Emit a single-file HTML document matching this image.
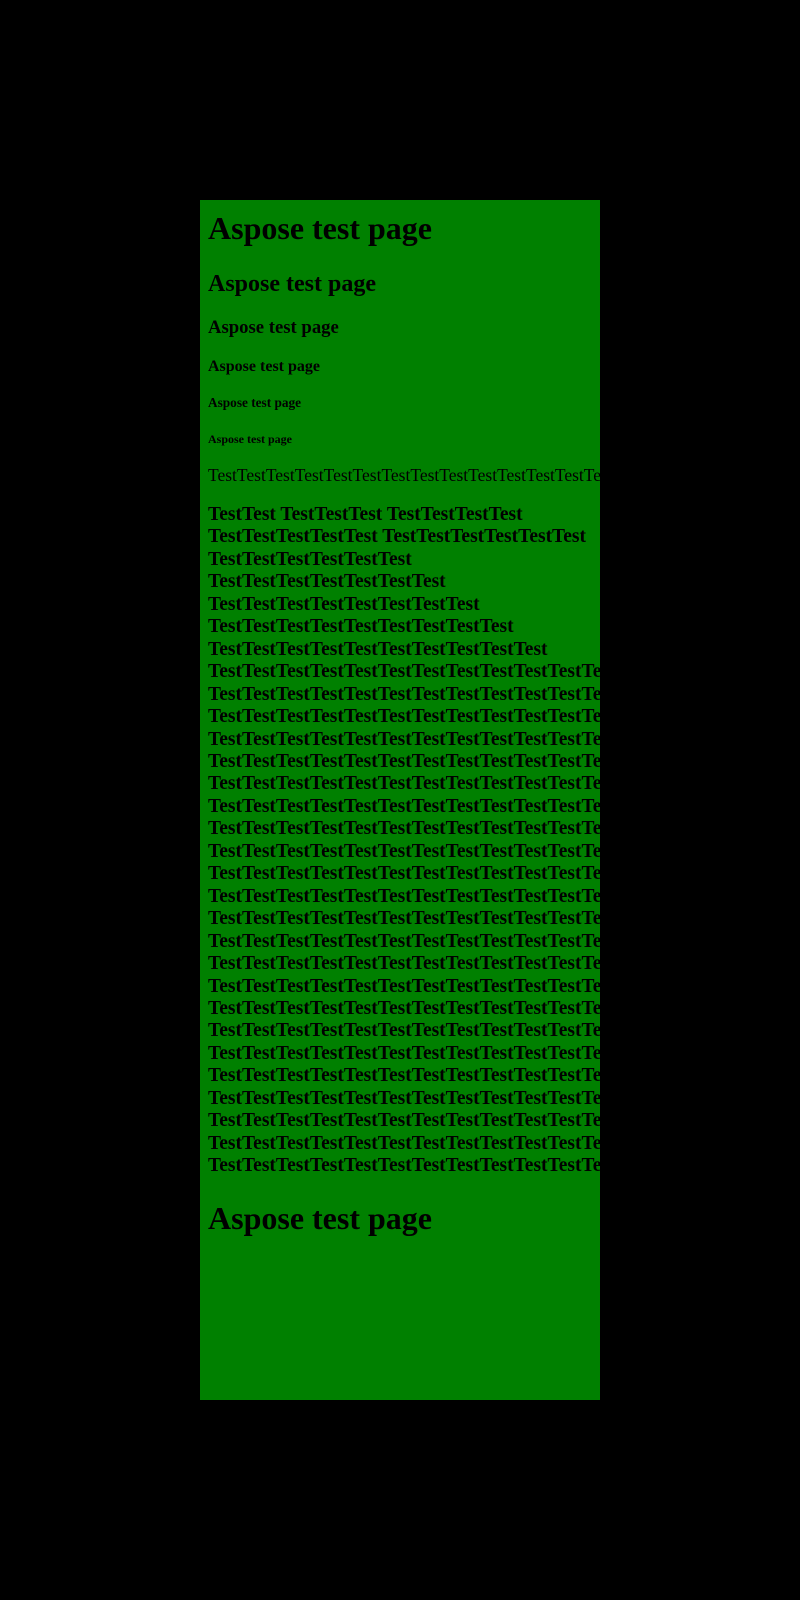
<!DOCTYPE html>
<html><head><style>
html,body{margin:0;padding:0;background:#000;width:800px;height:1600px;overflow:hidden}
#g{position:absolute;left:200px;top:200px;width:400px;height:1200px;background:#008000;overflow:hidden;font-family:"Liberation Serif",serif;color:#000}
#g div{position:absolute;left:8px;white-space:nowrap;font-weight:bold}
</style></head><body><div id="g">
<div style="top:9px;font-size:32px;line-height:38px">Aspose test page</div>
<div style="top:70px;font-size:24px;line-height:28px">Aspose test page</div>
<div style="top:117px;font-size:18.7px;line-height:22px">Aspose test page</div>
<div style="top:158px;font-size:16px;line-height:18px">Aspose test page</div>
<div style="top:195px;font-size:13.3px;line-height:16px">Aspose test page</div>
<div style="top:232px;font-size:12px;line-height:14px">Aspose test page</div>
<div style="top:265px;font-size:17.5px;line-height:20px;font-weight:normal!important">TestTestTestTestTestTestTestTestTestTestTestTestTestTestTestTest</div>
<div id="lines" style="top:304px;font-size:19.5px;line-height:22.45px"></div>
<div style="top:999px;font-size:32px;line-height:38px">Aspose test page</div>
</div>
<script>
var L=["TestTest TestTestTest TestTestTestTest","TestTestTestTestTest TestTestTestTestTestTest"];
for(var n=6;n<=10;n++)L.push("Test".repeat(n));
while(L.length<30)L.push("Test".repeat(16));
document.getElementById("lines").innerHTML=L.join("<br>");
</script>
</body></html>
